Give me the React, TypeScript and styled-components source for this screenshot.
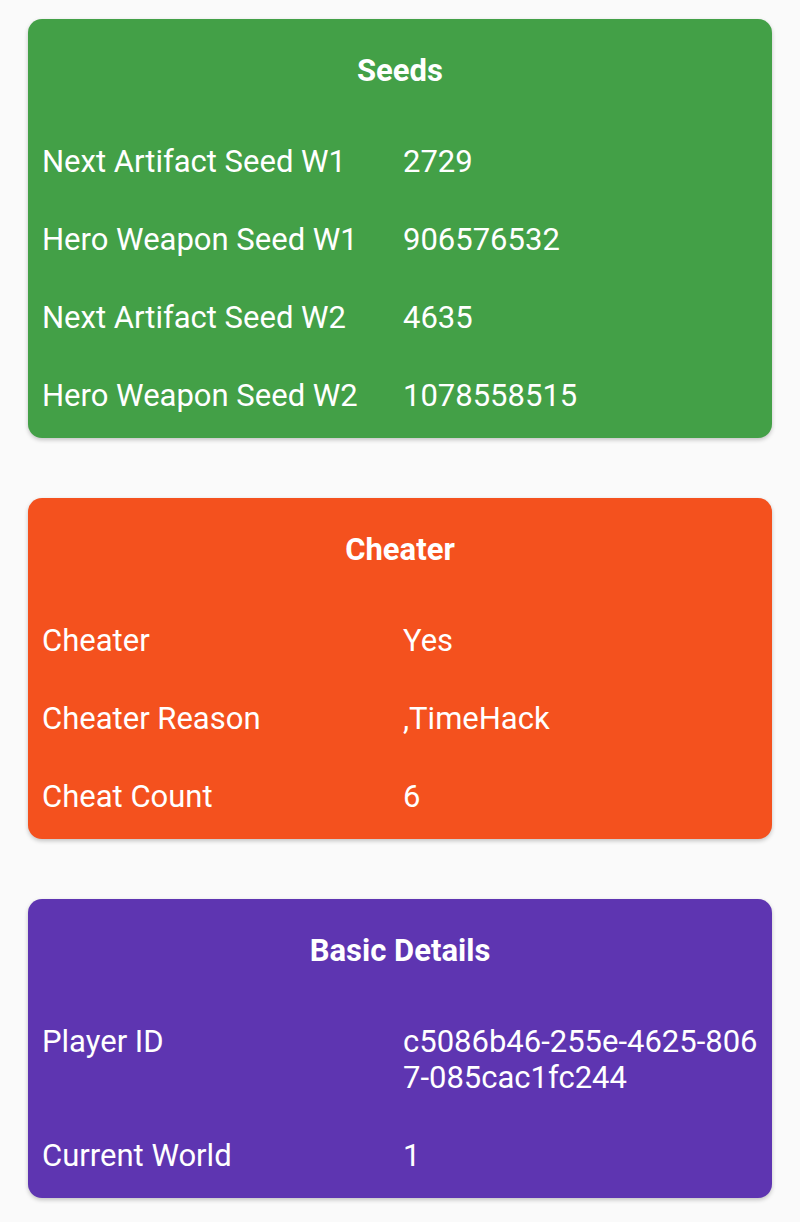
import React from 'react';
import styled, { createGlobalStyle } from 'styled-components';

const GlobalStyle = createGlobalStyle`
  html, body {
    margin: 0;
    padding: 0;
    background: #fafafa;
    font-family: Roboto, "Noto Sans", sans-serif;
  }
`;

type Row = { label: string; value: string };
type Section = { title: string; color: string; rows: Row[] };

const sections: Section[] = [
  {
    title: 'Seeds',
    color: '#43a047',
    rows: [
      { label: 'Next Artifact Seed W1', value: '2729' },
      { label: 'Hero Weapon Seed W1', value: '906576532' },
      { label: 'Next Artifact Seed W2', value: '4635' },
      { label: 'Hero Weapon Seed W2', value: '1078558515' },
    ],
  },
  {
    title: 'Cheater',
    color: '#f4511e',
    rows: [
      { label: 'Cheater', value: 'Yes' },
      { label: 'Cheater Reason', value: ',TimeHack' },
      { label: 'Cheat Count', value: '6' },
    ],
  },
  {
    title: 'Basic Details',
    color: '#5e35b1',
    rows: [
      { label: 'Player ID', value: 'c5086b46-255e-4625-8067-085cac1fc244' },
      { label: 'Current World', value: '1' },
    ],
  },
];

const Page = styled.div`
  display: flex;
  flex-direction: column;
  gap: 60px;
  padding: 19px 28px 24px;
`;

const Card = styled.section<{ $bg: string }>`
  background: ${(p) => p.$bg};
  border-radius: 14px;
  box-shadow: 0 2px 4px rgba(0, 0, 0, 0.22);
  color: #fff;
  padding-bottom: 4px;
`;

const Title = styled.h2`
  margin: 0;
  height: 103px;
  display: flex;
  align-items: center;
  justify-content: center;
  font-size: 31px;
  font-weight: 700;
`;

const InfoRow = styled.div`
  display: grid;
  grid-template-columns: 1fr 1fr;
  column-gap: 6px;
  padding: 22px 14px 20px;
  font-size: 31px;
  line-height: 36px;
`;

const Label = styled.div``;

const Value = styled.div`
  word-break: break-all;
`;

export default function App() {
  return (
    <>
      <GlobalStyle />
      <Page>
        {sections.map((s) => (
          <Card key={s.title} $bg={s.color}>
            <Title>{s.title}</Title>
            {s.rows.map((r) => (
              <InfoRow key={r.label}>
                <Label>{r.label}</Label>
                <Value>{r.value}</Value>
              </InfoRow>
            ))}
          </Card>
        ))}
      </Page>
    </>
  );
}
